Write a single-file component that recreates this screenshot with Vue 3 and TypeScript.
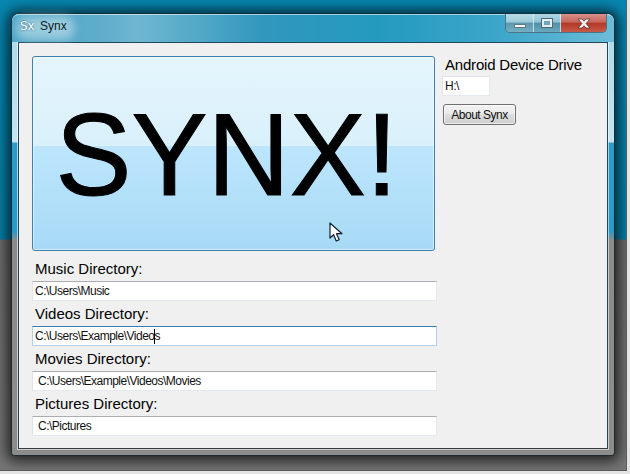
<script setup lang="ts">
interface DirField { label: string; value: string; inset: boolean; focused: boolean }
const fields: DirField[] = [
  { label: 'Music Directory:', value: 'C:\\Users\\Music', inset: false, focused: false },
  { label: 'Videos Directory:', value: 'C:\\Users\\Example\\Videos', inset: false, focused: true },
  { label: 'Movies Directory:', value: 'C:\\Users\\Example\\Videos\\Movies', inset: true, focused: false },
  { label: 'Pictures Directory:', value: 'C:\\Pictures', inset: true, focused: false },
]
</script>

<template>
  <div class="screenshot">
    <div class="desktop">
      <div class="window">
        <header class="titlebar">
          <div class="title-glow"></div>
          <span class="app-icon">Sx</span>
          <span class="app-title">Synx</span>
          <div class="controls">
            <div class="ctl ctl-min"><span class="min-glyph"></span></div>
            <div class="ctl ctl-max"><span class="max-glyph"></span></div>
            <div class="ctl ctl-close">
              <svg width="16" height="11" viewBox="0 0 16 11">
                <path d="M2 1h4l2 2.2L10 1h4l-4 4.5L14 10h-4L8 7.8 6 10H2l4-4.5z" fill="#f4f1f0" stroke="#5a3b3a" stroke-width="0.8" />
              </svg>
            </div>
          </div>
        </header>
        <main class="client">
          <section class="left">
            <div class="banner">
              <span class="banner-text">SYNX!</span>
              <svg class="pointer" width="14" height="21" viewBox="0 0 14 21">
                <path d="M1 1v15l3.6-3.3 2.6 6.3 3-1.3-2.7-6H13z" fill="#fff" stroke="#14202e" stroke-width="1.2" stroke-linejoin="round" />
              </svg>
            </div>
            <div v-for="f in fields" :key="f.label" class="field">
              <label class="field-label">{{ f.label }}</label>
              <div class="box" :class="{ focused: f.focused, inset: f.inset }">
                <span>{{ f.value }}</span>
                <i v-if="f.focused" class="caret"></i>
              </div>
            </div>
          </section>
          <aside class="right">
            <div class="drive-label">Android Device Drive</div>
            <div class="box drive-box"><span>H:\</span></div>
            <button class="about" type="button">About Synx</button>
          </aside>
        </main>
      </div>
    </div>
  </div>
</template>

<style>
html, body { margin: 0; padding: 0; background: #e4e4e4; }
</style>

<style scoped>
.screenshot {
  width: 630px;
  height: 474px;
  overflow: hidden;
  font-family: "Liberation Sans", Arial, sans-serif;
}
.desktop {
  box-sizing: border-box;
  width: 627px;
  height: 471px;
  padding: 14px 0 0 12px;
  border-right: 1px solid #5c5c5c;
  border-bottom: 1px solid #5c5c5c;
  overflow: hidden;
  background: linear-gradient(180deg, #0788b2 0, #0482ac 239px, #6e6e6e 240px, #767676 470px);
}
.window {
  box-sizing: border-box;
  width: 602px;
  height: 441px;
  display: flex;
  flex-direction: column;
  border-radius: 7px 7px 3px 3px;
  box-shadow: 0 0 1px 1px rgba(20, 40, 50, 0.75), 0 1px 14px 5px rgba(0, 0, 0, 0.72);
  background: linear-gradient(180deg, #a9d8e8 0, #c4e4f0 128px, #2c9bc8 129px, #2a9ac8 218px, #8c8c8c 226px, #8c8c8c 100%);
}
.titlebar {
  position: relative;
  flex: 0 0 28px;
  display: flex;
  align-items: center;
  padding: 0 0 6px 8px;
  box-sizing: border-box;
  border-radius: 7px 7px 0 0;
  border-top: 1px solid rgba(255, 255, 255, 0.55);
  background: linear-gradient(90deg, #4ba5c6 0, #5fadcb 15%, #6fb7d1 21%, #3197bd 42%, #249abf 60%, #3aa5c9 80%, #6cbcd8 100%);
}
.title-glow {
  position: absolute;
  left: 4px;
  top: 1px;
  width: 58px;
  height: 24px;
  border-radius: 10px;
  background: rgba(255, 255, 255, 0.42);
  filter: blur(5px);
}
.app-icon {
  position: relative;
  width: 20px;
  color: #fff;
  font-size: 12px;
  font-family: "DejaVu Sans", sans-serif;
  text-shadow: 0 0 2px rgba(10, 70, 100, 0.9);
}
.app-title {
  position: relative;
  color: #0c1a22;
  font-size: 12px;
}
.controls {
  position: absolute;
  right: 7px;
  top: -1px;
  height: 19px;
  display: flex;
  box-sizing: border-box;
  border: 1px solid #4b7386;
  border-top: 0;
  border-radius: 0 0 5px 5px;
  overflow: hidden;
}
.ctl {
  display: flex;
  align-items: center;
  justify-content: center;
  height: 100%;
  border-right: 1px solid rgba(230, 245, 250, 0.7);
}
.ctl-min {
  width: 27px;
  background: linear-gradient(180deg, #b8dbe6 0, #9dcbda 45%, #5c97ad 50%, #74afc3 100%);
}
.ctl-max {
  width: 26px;
  background: linear-gradient(180deg, #b0d6e3 0, #93c3d4 45%, #4f90a9 50%, #69a8bd 100%);
}
.ctl-close {
  width: 45px;
  border-right: 0;
  background: linear-gradient(180deg, #d8918a 0, #c7655c 45%, #b23a27 52%, #c65a48 100%);
}
.min-glyph {
  width: 12px;
  height: 4px;
  margin-top: 6px;
  background: #f2f6f8;
  border: 1px solid #607a83;
  box-sizing: border-box;
}
.max-glyph {
  width: 10px;
  height: 8px;
  box-sizing: border-box;
  border: 2px solid #e6eef2;
  outline: 1px solid #4d6a78;
  background: #6ea6bd;
}
.client {
  flex: 1;
  margin: 0 6px 6px;
  display: flex;
  gap: 6px;
  padding: 13px 0 0 13px;
  border: 1px solid #20475a;
  border-bottom-color: #3c3c3c;
  background: #f0f0f0;
  box-shadow: 0 0 0 1px rgba(255, 255, 255, 0.55);
}
.left {
  width: 405px;
  display: flex;
  flex-direction: column;
}
.banner {
  position: relative;
  box-sizing: border-box;
  width: 403px;
  height: 195px;
  margin-bottom: 5px;
  padding-right: 14px;
  display: flex;
  align-items: center;
  justify-content: center;
  border: 1px solid #3c7fb1;
  border-radius: 3px;
  background: linear-gradient(180deg, #e5f5fc 0, #d9f0fb 46%, #bde6fd 46%, #a7d9f5 100%);
  box-shadow: inset 0 0 0 1px rgba(255, 255, 255, 0.5);
}
.banner-text {
  font-size: 114px;
  line-height: 1;
  color: #000;
  -webkit-text-stroke: 1px #000;
  transform: translateY(1px) scaleY(1.03);
}
.pointer {
  position: absolute;
  left: 296px;
  top: 165px;
}
.field {
  display: flex;
  flex-direction: column;
}
.field-label {
  height: 25px;
  padding: 4px 0 0 3px;
  box-sizing: border-box;
  font-size: 15px;
  line-height: 17px;
  color: #000;
}
.box {
  position: relative;
  box-sizing: border-box;
  height: 20px;
  padding: 0 0 0 2px;
  font-size: 12px;
  line-height: 19px;
  letter-spacing: -0.5px;
  color: #111;
  background: #fff;
  border: 1px solid #e3e9ef;
  border-top-color: #abadb3;
  border-left-color: #e2e3ea;
}
.box.inset { padding-left: 5px; }
.box.focused {
  border-color: #b5cfe7;
  border-top-color: #3d7bad;
}
.caret {
  position: absolute;
  left: 121px;
  top: 2px;
  width: 1px;
  height: 15px;
  background: #000;
}
.right {
  display: flex;
  flex-direction: column;
  align-items: flex-start;
}
.drive-label {
  height: 20px;
  padding-left: 2px;
  font-size: 15px;
  line-height: 18px;
  letter-spacing: -0.2px;
  color: #000;
}
.drive-box {
  width: 48px;
  margin-left: -1px;
  border-top-color: #e2e3ea;
}
.about {
  box-sizing: border-box;
  width: 73px;
  height: 21px;
  margin-top: 8px;
  padding: 0;
  font-family: inherit;
  font-size: 12px;
  letter-spacing: -0.5px;
  color: #111;
  border: 1px solid #707070;
  border-radius: 3px;
  background: linear-gradient(180deg, #f2f2f2 0, #ebebeb 48%, #dddddd 50%, #cfcfcf 100%);
  box-shadow: inset 0 0 0 1px rgba(255, 255, 255, 0.6);
}
</style>
